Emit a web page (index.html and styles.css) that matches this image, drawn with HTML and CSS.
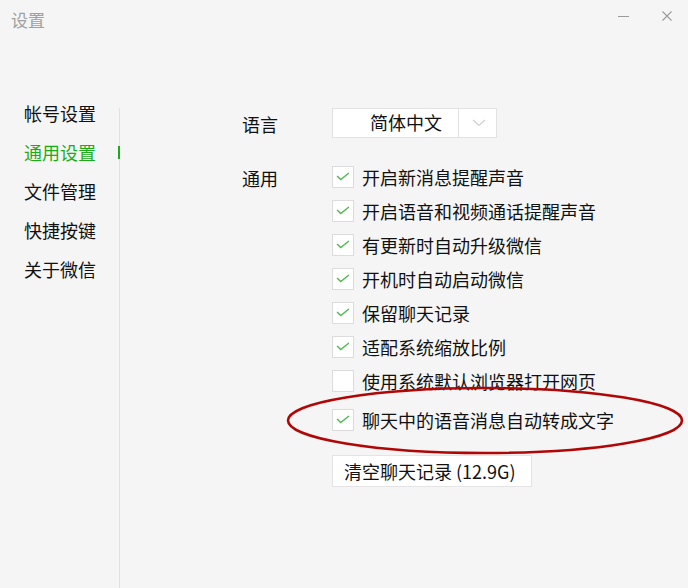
FILE: index.html
```html
<!DOCTYPE html>
<html lang="zh-CN">
<head>
<meta charset="utf-8">
<title>设置</title>
<link rel="stylesheet" href="styles.css">
</head>
<body>
<div class="window">
  <div class="titlebar">
    <div class="title">设置</div>
    <div class="controls">
      <span class="ctl-min"></span>
      <svg class="ctl-close" width="10" height="10" viewBox="0 0 10 10"><path d="M0.5 0.5 L9.5 9.5 M9.5 0.5 L0.5 9.5" stroke="#9a9a9a" stroke-width="1.1" fill="none"/></svg>
    </div>
  </div>
  <div class="main">
    <div class="sidebar">
      <ul class="nav">
        <li class="nav-item">帐号设置</li>
        <li class="nav-item active">通用设置</li>
        <li class="nav-item">文件管理</li>
        <li class="nav-item">快捷按键</li>
        <li class="nav-item">关于微信</li>
      </ul>
    </div>
    <div class="content">
      <div class="row lang-row">
        <div class="label">语言</div>
        <div class="select">
          <div class="select-value">简体中文</div>
          <div class="select-arrow">
            <svg width="14" height="8" viewBox="0 0 14 8"><path d="M1 1 L7 6.5 L13 1" stroke="#d0d0d0" stroke-width="1.2" fill="none"/></svg>
          </div>
        </div>
      </div>
      <div class="row general-row">
        <div class="label general-label">通用</div>
        <div class="options">
          <div class="option"><span class="box checked"><svg viewBox="0 0 22 22" width="20" height="20"><path d="M4.5 10 L8.5 13.8 L17.5 6.5" stroke="#4fb94f" stroke-width="1.5" fill="none"/></svg></span><span class="opt-text">开启新消息提醒声音</span></div>
          <div class="option"><span class="box checked"><svg viewBox="0 0 22 22" width="20" height="20"><path d="M4.5 10 L8.5 13.8 L17.5 6.5" stroke="#4fb94f" stroke-width="1.5" fill="none"/></svg></span><span class="opt-text">开启语音和视频通话提醒声音</span></div>
          <div class="option"><span class="box checked"><svg viewBox="0 0 22 22" width="20" height="20"><path d="M4.5 10 L8.5 13.8 L17.5 6.5" stroke="#4fb94f" stroke-width="1.5" fill="none"/></svg></span><span class="opt-text">有更新时自动升级微信</span></div>
          <div class="option"><span class="box checked"><svg viewBox="0 0 22 22" width="20" height="20"><path d="M4.5 10 L8.5 13.8 L17.5 6.5" stroke="#4fb94f" stroke-width="1.5" fill="none"/></svg></span><span class="opt-text">开机时自动启动微信</span></div>
          <div class="option"><span class="box checked"><svg viewBox="0 0 22 22" width="20" height="20"><path d="M4.5 10 L8.5 13.8 L17.5 6.5" stroke="#4fb94f" stroke-width="1.5" fill="none"/></svg></span><span class="opt-text">保留聊天记录</span></div>
          <div class="option"><span class="box checked"><svg viewBox="0 0 22 22" width="20" height="20"><path d="M4.5 10 L8.5 13.8 L17.5 6.5" stroke="#4fb94f" stroke-width="1.5" fill="none"/></svg></span><span class="opt-text">适配系统缩放比例</span></div>
          <div class="option"><span class="box"></span><span class="opt-text">使用系统默认浏览器打开网页</span></div>
          <div class="option option-highlight"><span class="box checked"><svg viewBox="0 0 22 22" width="20" height="20"><path d="M4.5 10 L8.5 13.8 L17.5 6.5" stroke="#4fb94f" stroke-width="1.5" fill="none"/></svg></span><span class="opt-text">聊天中的语音消息自动转成文字</span></div>
          <button class="clear-btn">清空聊天记录 (12.9G)</button>
        </div>
      </div>
    </div>
  </div>
  <svg class="annotation" width="688" height="588" viewBox="0 0 688 588">
    <ellipse cx="485" cy="420.5" rx="197" ry="32.5" fill="none" stroke="#b10606" stroke-width="2.6"/>
  </svg>
</div>
</body>
</html>
```

FILE: styles.css
```css
* { box-sizing: border-box; }
html, body {
  margin: 0;
  padding: 0;
}
body {
  background: #f5f5f5;
  font-family: "Noto Sans CJK SC", "Noto Sans", "Liberation Sans", sans-serif;
  color: #111;
}
.window {
  position: relative;
  width: 688px;
  height: 588px;
  overflow: hidden;
  background: #f5f5f5;
  display: flex;
  flex-direction: column;
}
.titlebar {
  height: 40px;
  display: flex;
  align-items: flex-start;
  padding-left: 11px;
}
.title {
  font-size: 17px;
  line-height: 40px;
  color: #a0a0a0;
}
.controls {
  margin-left: auto;
  margin-top: 11px;
  display: flex;
  align-items: center;
  height: 10px;
  padding-right: 16px;
}
.ctl-min {
  display: block;
  width: 11px;
  height: 1px;
  background: #9a9a9a;
  margin-right: 33px;
}
.ctl-close { display: block; }

.main {
  flex: 1;
  display: flex;
}
.sidebar {
  width: 120px;
  margin-top: 68px;
  border-right: 1px solid #e1e1e1;
}
.nav {
  list-style: none;
  margin: -14px 0 0 0;
  padding: 0;
}
.nav-item {
  position: relative;
  height: 39px;
  line-height: 38px;
  font-size: 18px;
  padding-left: 24px;
  color: #111;
}
.nav-item.active { color: #1aad19; }
.nav-item.active::after {
  content: "";
  position: absolute;
  right: -1px;
  top: 13px;
  width: 2px;
  height: 13px;
  background: #1aad19;
}

.content {
  flex: 1;
  padding-top: 68px;
  padding-left: 122px;
}
.row {
  display: flex;
}
.label {
  width: 90px;
  font-size: 18px;
  color: #111;
}
.lang-row { align-items: flex-start; height: 30px; }
.lang-row .label { line-height: 30px; height: 30px; padding-top: 1px; }
.select {
  display: flex;
  width: 165px;
  height: 30px;
  border: 1px solid #e2e2e2;
  background: #fff;
}
.select-value {
  width: 126px;
  border-right: 1px solid #e2e2e2;
  font-size: 18px;
  line-height: 27px;
  padding-left: 37px;
  color: #111;
}
.select-arrow {
  flex: 1;
  display: flex;
  align-items: center;
  justify-content: center;
  padding-left: 2px;
}
.general-row { margin-top: 22px; }
.general-label { line-height: 36px; }
.options {
  display: flex;
  flex-direction: column;
  align-items: flex-start;
}
.option {
  height: 34px;
  display: flex;
  align-items: center;
}
.option-highlight { margin-top: 5px; }
.box {
  width: 22px;
  height: 22px;
  border: 1px solid #dcdcdc;
  background: #fff;
  margin-right: 8px;
  display: flex;
  align-items: center;
  justify-content: center;
}
.box svg { display: block; }
.opt-text {
  font-size: 18px;
  color: #111;
  line-height: 22px;
  margin-top: -1px;
}
.clear-btn {
  margin-top: 18px;
  width: 200px;
  height: 32px;
  border: 1px solid #e4e4e4;
  background: #fff;
  font-family: inherit;
  font-size: 18px;
  color: #111;
  text-align: left;
  padding: 0 0 0 11px;
  line-height: 29px;
}
.annotation {
  position: absolute;
  left: 0;
  top: 0;
  pointer-events: none;
}
```
